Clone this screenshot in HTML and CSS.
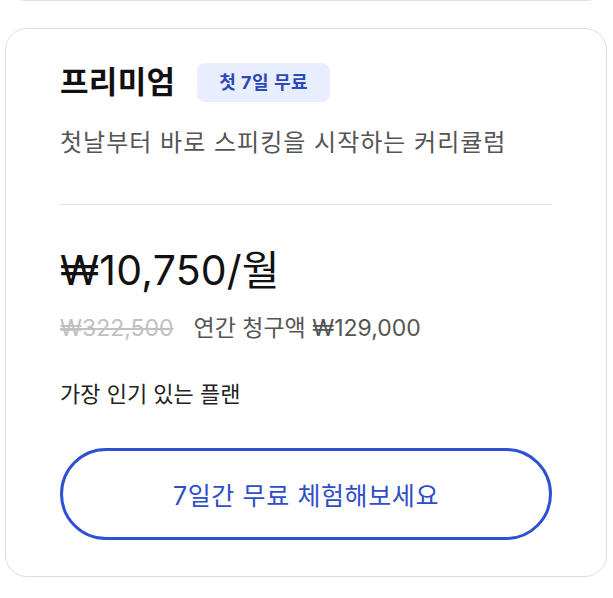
FILE: index.html
```html
<!DOCTYPE html>
<html lang="ko">
<head>
<meta charset="utf-8">
<link rel="stylesheet" href="styles.css">
</head>
<body>
<div class="page">
  <div class="prev-card"></div>
  <section class="card">
    <div class="head">
      <h2 class="title">프리미엄</h2>
      <span class="badge">첫 7일 무료</span>
    </div>
    <p class="desc">첫날부터 바로 스피킹을 시작하는 커리큘럼</p>
    <hr class="divider">
    <div class="price">₩10,750/월</div>
    <div class="billing">
      <span class="old">₩322,500</span>
      <span class="annual">연간 청구액 ₩129,000</span>
    </div>
    <p class="note">가장 인기 있는 플랜</p>
    <button class="cta">7일간 무료 체험해보세요</button>
  </section>
</div>
</body>
</html>
```
FILE: styles.css
```css
* { box-sizing: border-box; }
html, body { margin: 0; padding: 0; background: #fff; }
body {
  font-family: Inter, "Noto Sans CJK KR", "Noto Sans", sans-serif;
  color: #111;
}
.page {
  padding: 0 6px 0 5px;
}
.prev-card {
  height: 40px;
  margin-top: -39px;
  border: 1.5px solid #e2e2e2;
  border-radius: 22px;
}
.card {
  margin-top: 27px;
  border: 1.5px solid #dedede;
  border-radius: 22px;
  padding: 30px 54px 36px 54px;
  height: 549px;
}
.head {
  display: flex;
  align-items: center;
  gap: 22px;
}
.title {
  margin: 0;
  font-size: 31px;
  font-weight: 700;
  letter-spacing: 0.3px;
  line-height: 46px;
  color: #111;
}
.badge {
  background: #e8eefd;
  color: #2d48b8;
  font-size: 18px;
  font-weight: 700;
  border-radius: 8px;
  padding: 0 22px;
  height: 39px;
  line-height: 39px;
  letter-spacing: 0.5px;
}
.desc {
  margin: 21px 0 0;
  font-size: 24px;
  line-height: 34px;
  color: #555;
  letter-spacing: 1px;
}
.divider {
  border: 0;
  border-top: 1.5px solid #e3e3e3;
  margin: 44px 0 0;
}
.price {
  margin-top: 38px;
  font-size: 41px;
  line-height: 54px;
  color: #111;
  letter-spacing: 0.2px;
}
.billing {
  margin-top: 16px;
  display: flex;
  gap: 20px;
  font-size: 23px;
  line-height: 30px;
}
.old {
  color: #c0c0c0;
  text-decoration: line-through;
}
.annual { color: #555; }
.note {
  margin: 36px 0 0;
  font-size: 22px;
  line-height: 30px;
  color: #222;
}
.cta {
  display: block;
  width: 100%;
  margin-top: 39px;
  height: 92px;
  border: 3px solid #2e50d4;
  border-radius: 46px;
  background: #fff;
  color: #2e4ec8;
  font-family: inherit;
  font-size: 25px;
  font-weight: 400;
  letter-spacing: 0.6px;
}
```
